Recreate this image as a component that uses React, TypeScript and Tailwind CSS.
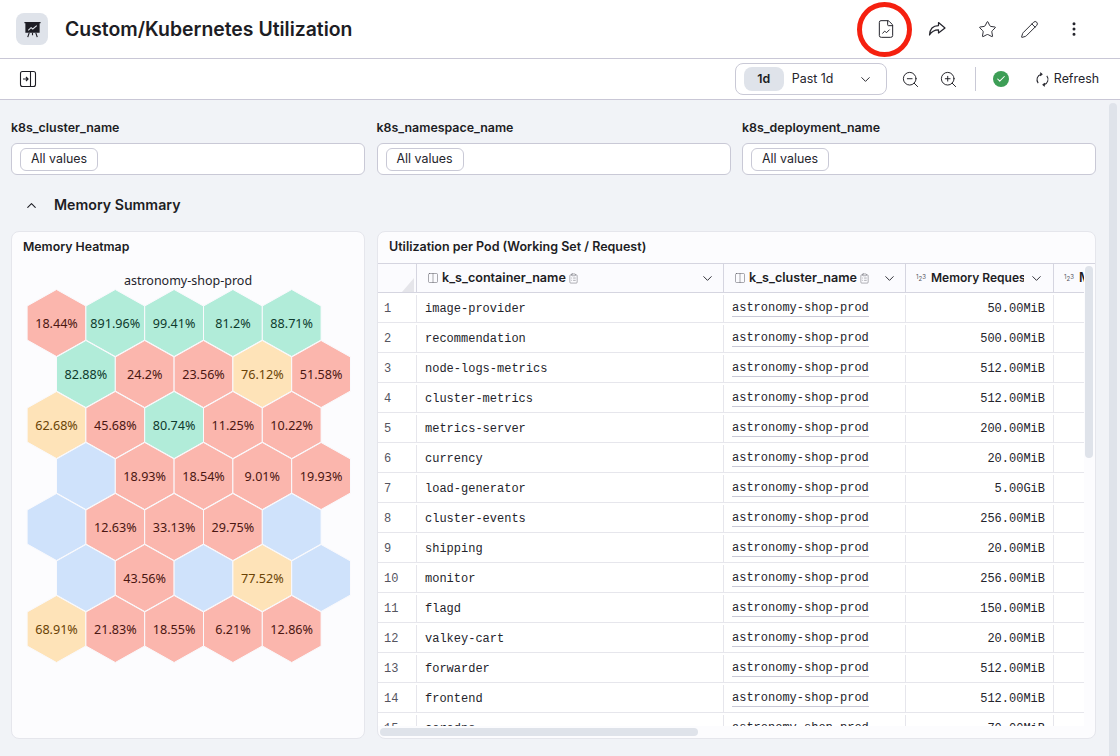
import { ChevronDown, ChevronUp, ClipboardList, Columns2, EllipsisVertical, FileChartLine, Pencil, Star, ZoomIn, ZoomOut, Check } from 'lucide-react'

type Tone = 'red' | 'green' | 'yellow' | 'blue'

const hexRows: [string, Tone][][] = [
  [['18.44%', 'red'], ['891.96%', 'green'], ['99.41%', 'green'], ['81.2%', 'green'], ['88.71%', 'green']],
  [['82.88%', 'green'], ['24.2%', 'red'], ['23.56%', 'red'], ['76.12%', 'yellow'], ['51.58%', 'red']],
  [['62.68%', 'yellow'], ['45.68%', 'red'], ['80.74%', 'green'], ['11.25%', 'red'], ['10.22%', 'red']],
  [['', 'blue'], ['18.93%', 'red'], ['18.54%', 'red'], ['9.01%', 'red'], ['19.93%', 'red']],
  [['', 'blue'], ['12.63%', 'red'], ['33.13%', 'red'], ['29.75%', 'red'], ['', 'blue']],
  [['', 'blue'], ['43.56%', 'red'], ['', 'blue'], ['77.52%', 'yellow'], ['', 'blue']],
  [['68.91%', 'yellow'], ['21.83%', 'red'], ['18.55%', 'red'], ['6.21%', 'red'], ['12.86%', 'red']],
]

const hexFill: Record<Tone, string> = { red: '#fbb6ad', green: '#b1ecd9', yellow: '#fee3b8', blue: '#cfe2fb' }
const hexText: Record<Tone, string> = { red: '#4b1712', green: '#0e3a2d', yellow: '#6a4306', blue: '#000' }

const pods = [
  ['image-provider', '50.00MiB'],
  ['recommendation', '500.00MiB'],
  ['node-logs-metrics', '512.00MiB'],
  ['cluster-metrics', '512.00MiB'],
  ['metrics-server', '200.00MiB'],
  ['currency', '20.00MiB'],
  ['load-generator', '5.00GiB'],
  ['cluster-events', '256.00MiB'],
  ['shipping', '20.00MiB'],
  ['monitor', '256.00MiB'],
  ['flagd', '150.00MiB'],
  ['valkey-cart', '20.00MiB'],
  ['forwarder', '512.00MiB'],
  ['frontend', '512.00MiB'],
  ['coredns', '70.00MiB'],
]

function Heatmap() {
  return (
    <svg viewBox="12 264 352 420" className="block w-[352px] h-[420px]">
      <text x="188" y="285" textAnchor="middle" fontSize="12.5" fill="#24242c" fontFamily="'Noto Sans', sans-serif">
        astronomy-shop-prod
      </text>
      {hexRows.map((row, r) =>
        row.map(([label, tone], c) => {
          const cx = 56.5 + c * 58.8 + (r % 2 ? 29.4 : 0)
          const cy = 323 + r * 51
          const w = 29.4
          const points = [
            [cx, cy - 33.5],
            [cx + w, cy - 17],
            [cx + w, cy + 17],
            [cx, cy + 33.5],
            [cx - w, cy + 17],
            [cx - w, cy - 17],
          ]
            .map((p) => p.join(','))
            .join(' ')
          return (
            <g key={`${r}-${c}`}>
              <polygon points={points} fill={hexFill[tone]} stroke="#fafafd" strokeWidth="1" />
              <text
                x={cx}
                y={cy + 4.5}
                textAnchor="middle"
                fontSize="12.6"
                fill={hexText[tone]}
                fontFamily="'Noto Sans', sans-serif"
              >
                {label}
              </text>
            </g>
          )
        }),
      )}
    </svg>
  )
}

function BoardIcon() {
  return (
    <svg viewBox="0 0 20 20" className="w-[19px] h-[19px]">
      <path d="M1.500 2h17v1.500h-1V13.500H2.500V3.500H1.500z" fill="#1d1d24" />
      <path d="M5.500 11l3-3 1.800 1.500L14.500 6" fill="none" stroke="#e0e4ea" strokeWidth="1.100" />
      <path d="M6.500 13.500L5 18M13.500 13.500L15 18M10 13.500V16" stroke="#1d1d24" strokeWidth="1.200" />
    </svg>
  )
}

function PanelIcon() {
  return (
    <svg viewBox="0 0 18 18" className="w-[18px] h-[18px]" fill="none" stroke="#1d1d24" strokeWidth="1.100">
      <rect x="1.500" y="1.500" width="15" height="15" rx="2" />
      <path d="M11.500 1.500v15" />
      <path d="M4 9h4.800M7 7l2 2-2 2" strokeWidth="1.200" />
    </svg>
  )
}

function ShareIcon() {
  return (
    <svg viewBox="0 0 20 20" className="w-[20px] h-[20px]" fill="none" stroke="#24242c" strokeWidth="1.200" strokeLinejoin="round">
      <path d="M11.500 3.500L18 9l-6.500 5v-3.200C7 10.800 4.500 12.500 2.500 16c.3-5.500 3.500-9.300 9-9.400z" />
    </svg>
  )
}

function RefreshIcon() {
  return (
    <svg viewBox="0 0 16 16" className="w-[15px] h-[15px]" fill="none" stroke="#24242c" strokeWidth="1.100">
      <path d="M3.400 11.800A6 6 0 0 1 6.500 2.300" />
      <path d="M12.600 4.200A6 6 0 0 1 9.500 13.700" />
      <path d="M5.500 0.800L7.500 2.500L5.500 4.200" />
      <path d="M10.500 11.800L8.500 13.500L10.500 15.200" />
    </svg>
  )
}

function NumIcon() {
  return (
    <span className="flex w-[10px] shrink-0 items-start text-[6px] leading-[8px] text-[#55555f]">
      <span>1</span>
      <span className="mt-[2px]">2</span>
      <span>3</span>
    </span>
  )
}

function FilterBox({ label }: { label: string }) {
  return (
    <div>
      <div className="h-4 text-[12.400px] leading-4 font-semibold text-[#1d1d24]">{label}</div>
      <div className="mt-[7px] flex h-8 items-center rounded-md border border-[#c9c9d6] bg-white pl-2">
        <span className="flex h-[23px] items-center rounded-md border border-[#c9c9d6] px-[10px] text-[12.400px] text-[#24242c]">
          All values
        </span>
      </div>
    </div>
  )
}

function HeaderCell({ name }: { name: string }) {
  return (
    <div className="flex items-center border-r border-[#d5d5e0] pl-[10px]">
      <Columns2 size={12} strokeWidth={1} className="shrink-0 text-[#55555f]" />
      <span className="ml-[3px] text-[12.600px] font-semibold text-[#1d1d24]">{name}</span>
      <ClipboardList size={11} strokeWidth={1} className="ml-[2px] shrink-0 text-[#55555f]" />
      <ChevronDown size={15} strokeWidth={1.500} className="ml-auto mr-2 shrink-0 text-[#24242c]" />
    </div>
  )
}

function PodTable() {
  return (
    <div className="h-[462px] w-[706px] overflow-hidden">
      <div className="grid h-[29px] grid-cols-[39px_307px_182px_148px_1fr] border-b border-[#d5d5e0] bg-[#fbfbfe]">
        <div className="flex items-end justify-end border-r border-[#d5d5e0] pr-[2px]">
          <svg viewBox="0 0 12 14" className="h-[14px] w-[12px]">
            <polygon points="12,0 12,14 0,14" fill="#e5e5ea" />
          </svg>
        </div>
        <HeaderCell name="k_s_container_name" />
        <HeaderCell name="k_s_cluster_name" />
        <div className="flex items-center overflow-hidden border-r border-[#d5d5e0] pl-[10px]">
          <NumIcon />
          <span className="ml-[5px] w-[93px] overflow-hidden whitespace-nowrap text-[12px] font-semibold text-[#1d1d24]">
            Memory Request
          </span>
          <ChevronDown size={15} strokeWidth={1.500} className="ml-[5px] shrink-0 text-[#24242c]" />
        </div>
        <div className="flex items-center overflow-hidden pl-[10px]">
          <NumIcon />
          <span className="ml-[5px] text-[12.600px] font-semibold text-[#1d1d24]">M</span>
        </div>
      </div>
      {pods.map(([name, request], i) => (
        <div
          key={name}
          className="grid h-[30px] grid-cols-[39px_307px_182px_148px_1fr] border-b border-[#e6e6ec] bg-white pt-[2px] font-['Liberation_Mono',monospace] text-[12px] text-[#24242c]"
        >
          <div className="flex items-center border-r border-[#e6e6ec] pl-[6px] text-[#55555f]">{i + 1}</div>
          <div className="flex items-center border-r border-[#e6e6ec] pl-2">{name}</div>
          <div className="flex items-center border-r border-[#e6e6ec] pl-2">
            <span className="border-b border-[#c9c9d6] leading-4">astronomy-shop-prod</span>
          </div>
          <div className="flex items-center justify-end border-r border-[#e6e6ec] pr-2">{request}</div>
          <div />
        </div>
      ))}
    </div>
  )
}

export default function App() {
  return (
    <div className="flex h-screen flex-col overflow-hidden bg-[#f1f3f7] font-['Inter','Noto_Sans',sans-serif] text-[#1d1d24]">
      <header className="flex h-[59px] shrink-0 items-center border-b border-[#c9c7d6] bg-white pl-4">
        <div className="flex h-8 w-8 items-center justify-center rounded-lg bg-[#dfe3ea]">
          <BoardIcon />
        </div>
        <h1 className="ml-[17px] pt-px text-[19.400px] font-semibold text-[#1d1d24]">Custom/Kubernetes Utilization</h1>
        <div className="ml-auto flex items-center pr-[37px]">
          <button className="relative flex h-5 w-5 items-center justify-center">
            <FileChartLine size={20} strokeWidth={1.200} className="text-[#24242c]" />
            <span className="absolute left-[-19px] top-[-17px] h-[55px] w-[55px] rounded-full border-[5px] border-[#f5200f]" />
          </button>
          <button className="ml-[31px]"><ShareIcon /></button>
          <button className="ml-[31px]"><Star size={19} strokeWidth={1.200} className="text-[#24242c]" /></button>
          <button className="ml-[23px]"><Pencil size={19} strokeWidth={1.200} className="text-[#24242c]" /></button>
          <button className="ml-[26px]"><EllipsisVertical size={18} strokeWidth={2} className="text-[#24242c]" /></button>
        </div>
      </header>

      <div className="flex h-[41px] shrink-0 items-center border-b border-[#c9c7d6] bg-white pl-[19px]">
        <PanelIcon />
        <div className="ml-auto flex items-center pr-[21px]">
          <div className="flex h-8 w-[152px] items-center rounded-lg border border-[#c9c9d6] pl-2">
            <span className="flex h-6 w-10 items-center justify-center rounded-lg bg-[#dfe3ea] text-[12.400px] font-semibold">1d</span>
            <span className="ml-2 text-[12.400px] text-[#24242c]">Past 1d</span>
            <ChevronDown size={15} strokeWidth={1.500} className="ml-auto mr-[13px]" />
          </div>
          <ZoomOut size={19} strokeWidth={1.200} className="ml-[14px]" />
          <ZoomIn size={19} strokeWidth={1.200} className="ml-[19px]" />
          <div className="ml-[17px] h-6 w-px bg-[#c9c9d6]" />
          <span className="ml-[17px] flex h-4 w-4 items-center justify-center rounded-full bg-[#3d9e56]">
            <Check size={10} strokeWidth={2.500} className="text-white" />
          </span>
          <span className="ml-[26px]"><RefreshIcon /></span>
          <span className="ml-1 text-[12.400px] text-[#24242c]">Refresh</span>
        </div>
      </div>

      <main className="relative flex-1 overflow-hidden pl-[11px]">
        <div className="w-[1085px] pt-5">
          <div className="grid grid-cols-3 gap-[11.500px]">
            <FilterBox label="k8s_cluster_name" />
            <FilterBox label="k8s_namespace_name" />
            <FilterBox label="k8s_deployment_name" />
          </div>

          <div className="flex h-14 items-center pl-[13px] pt-1">
            <ChevronUp size={15} strokeWidth={1.700} />
            <span className="ml-[15px] text-[14.200px] font-semibold">Memory Summary</span>
          </div>

          <div className="grid grid-cols-[354px_1fr] gap-3">
            <section className="h-[508px] rounded-lg border border-[#e5e6ec] bg-[#fcfcfe]">
              <h3 className="flex h-[30px] items-center pl-[11px] text-[12.300px] font-semibold">Memory Heatmap</h3>
              <div className="pt-[2px]">
                <Heatmap />
              </div>
            </section>

            <section className="relative h-[508px] rounded-lg border border-[#e5e6ec] bg-[#fcfcfe]">
              <h3 className="flex h-8 items-center border-b border-[#d5d5e0] pb-px pl-[11px] text-[12.500px] font-semibold">
                Utilization per Pod (Working Set / Request)
              </h3>
              <PodTable />
              <div className="absolute bottom-[2px] left-[2px] h-2 w-[318px] rounded-full bg-[#dfe3ea]" />
              <div className="absolute right-[2px] top-[34px] h-[192px] w-2 rounded-full bg-[#dfe3ea]" />
            </section>
          </div>
        </div>
        <div className="absolute right-[3px] top-[3px] h-[700px] w-2 rounded-full bg-[#dfe3ea]" />
      </main>
    </div>
  )
}
